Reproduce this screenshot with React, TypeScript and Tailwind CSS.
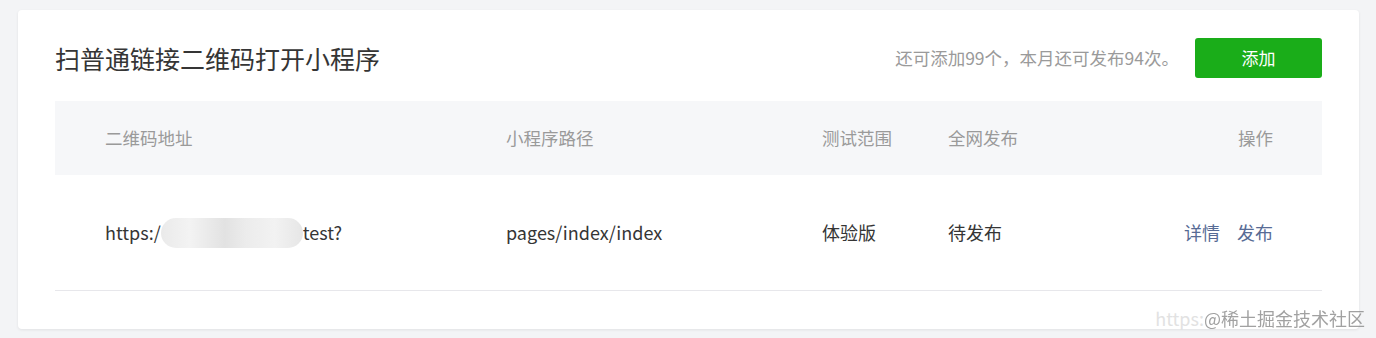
const cols = [
  { key: 'url', label: '二维码地址', width: 'w-[401px]' },
  { key: 'path', label: '小程序路径', width: 'w-[316px]' },
  { key: 'scope', label: '测试范围', width: 'w-[126px]' },
  { key: 'publish', label: '全网发布', width: 'w-[160px]' },
]

function App() {
  return (
    <div
      className="w-[1376px] h-[338px] bg-[#f3f4f6] pt-[10px] pl-[18px] pr-[17px]"
      style={{ fontFamily: '"Noto Sans CJK SC", "Noto Sans", sans-serif' }}
    >
      <div className="relative h-[319px] bg-white rounded-[4px] shadow-[0_1px_3px_rgba(0,0,0,0.08)] px-[37px] pt-[28px]">
        {/* Header */}
        <div className="flex items-center justify-between h-[40px]">
          <h2 className="text-[25px] leading-[32px] text-[#353535]">扫普通链接二维码打开小程序</h2>
          <div className="flex items-center">
            <span className="text-[17.5px] text-[#9a9a9a] mr-[16px]">还可添加99个，本月还可发布94次。</span>
            <button className="w-[127px] h-[40px] rounded-[3px] bg-[#1aad19] text-white text-[17px]">添加</button>
          </div>
        </div>

        {/* Table */}
        <div className="mt-[23px]">
          <div className="flex items-center h-[74px] bg-[#f6f7f9] pl-[50px] pr-[49px] text-[17.5px] text-[#9a9a9a]">
            {cols.map(c => (
              <div key={c.key} className={c.width}>{c.label}</div>
            ))}
            <div className="flex-1 text-right">操作</div>
          </div>
          <div className="flex items-center h-[116px] border-b border-[#e7e7eb] pl-[50px] pr-[49px] text-[18px] text-[#353535]">
            <div className="w-[401px] flex items-center">
              <span>https:/</span>
              <span className="h-[30px] w-[142px] rounded-full bg-[linear-gradient(90deg,#eaeaea_0%,#f3f3f3_20%,#e2e2e2_45%,#ececec_60%,#f2f2f2_80%,#e6e6e6_100%)] blur-[0.5px]" />
              <span>test?</span>
            </div>
            <div className="w-[316px]">pages/index/index</div>
            <div className="w-[126px]">体验版</div>
            <div className="w-[160px]">待发布</div>
            <div className="flex-1 flex justify-end gap-[17px] text-[#576b95]">
              <a>详情</a>
              <a>发布</a>
            </div>
          </div>
        </div>

        {/* watermark */}
        <div className="absolute right-[-6px] bottom-[2px] flex items-end text-[18px] leading-none">
          <span className="text-[#e2e2e2]">https:</span>
          <span className="text-[#8a8a8a] opacity-80">@稀土掘金技术社区</span>
        </div>
      </div>
    </div>
  )
}

export default App
